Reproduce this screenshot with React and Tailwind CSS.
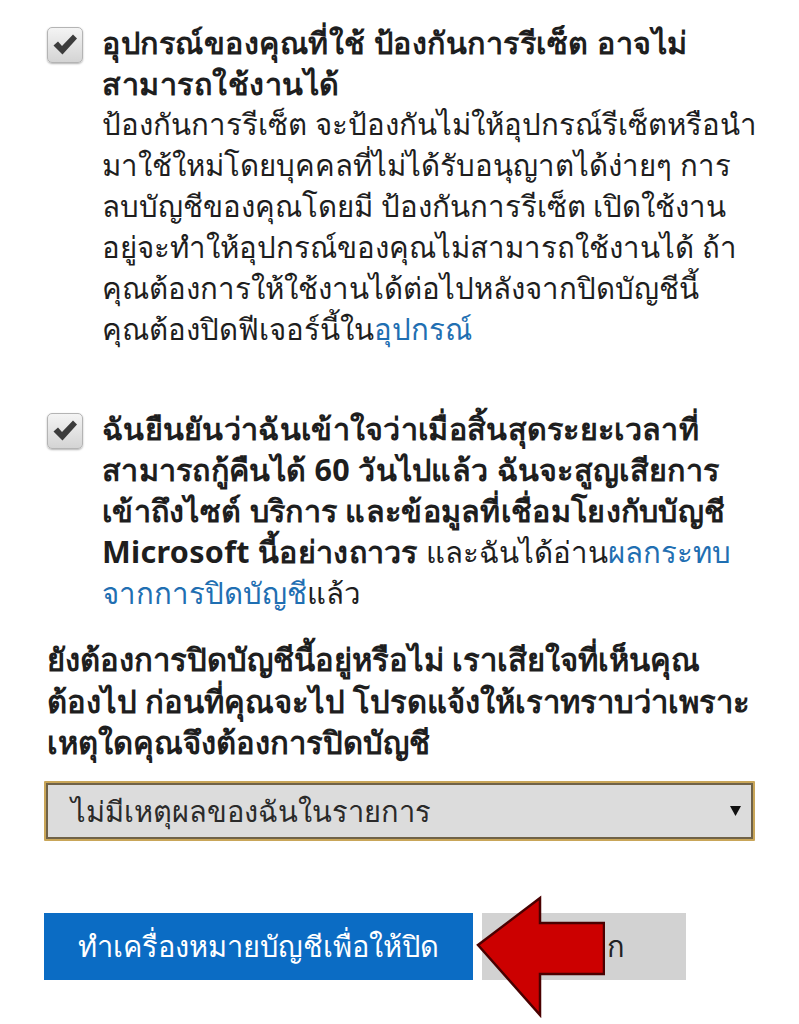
import React from "react";

function CheckBox() {
  return (
    <div className="mt-[5px] flex h-[36px] w-[36px] shrink-0 items-center justify-center rounded-[5px] border border-[#b4b4b4] bg-gradient-to-b from-[#f4f4f4] to-[#d4d4d4] shadow-[0_1px_2px_rgba(0,0,0,0.3)]">
      <svg width="26" height="24" viewBox="0 0 26 24">
        <path d="M1.5 12.5 L6 8.5 L10 13 L21 1.5 L25 5.5 L10.5 21.5 Z" fill="#3c3c3c" />
      </svg>
    </div>
  );
}

export default function App() {
  const font = { fontFamily: '"Noto Sans", "Liberation Sans", sans-serif' };
  return (
    <div className="h-[1024px] w-[799px] overflow-hidden bg-white text-[#1e1e1e]" style={font}>
      <div className="pl-[47px] pt-[22px]">
        <div className="flex gap-[19px]">
          <CheckBox />
          <div className="whitespace-nowrap text-[29.4px] leading-[41px]">
            <div className="text-[30.5px] font-bold tracking-[0.5px]">
              อุปกรณ์ของคุณที่ใช้ ป้องกันการรีเซ็ต อาจไม่
              <br />
              สามารถใช้งานได้
            </div>
            <div>
              ป้องกันการรีเซ็ต จะป้องกันไม่ให้อุปกรณ์รีเซ็ตหรือนำ
              <br />
              มาใช้ใหม่โดยบุคคลที่ไม่ได้รับอนุญาตได้ง่ายๆ การ
              <br />
              ลบบัญชีของคุณโดยมี ป้องกันการรีเซ็ต เปิดใช้งาน
              <br />
              อยู่จะทำให้อุปกรณ์ของคุณไม่สามารถใช้งานได้ ถ้า
              <br />
              คุณต้องการให้ใช้งานได้ต่อไปหลังจากปิดบัญชีนี้
              <br />
              คุณต้องปิดฟีเจอร์นี้ใน<span className="text-[#1f6fb2]">อุปกรณ์</span>
            </div>
          </div>
        </div>

        <div className="mt-[58px] flex gap-[19px]">
          <CheckBox />
          <div className="whitespace-nowrap text-[29.4px] leading-[41px]">
            <div className="text-[30.5px] font-bold tracking-[0.3px]">
              ฉันยืนยันว่าฉันเข้าใจว่าเมื่อสิ้นสุดระยะเวลาที่
              <br />
              สามารถกู้คืนได้ 60 วันไปแล้ว ฉันจะสูญเสียการ
              <br />
              เข้าถึงไซต์ บริการ และข้อมูลที่เชื่อมโยงกับบัญชี
              <br />
              Microsoft นี้อย่างถาวร{" "}
              <span className="text-[29.4px] font-normal tracking-normal">และฉันได้อ่าน</span>
              <span className="text-[29.4px] font-normal tracking-normal text-[#1f6fb2]">ผลกระทบ</span>
            </div>
            <div>
              <span className="text-[#1f6fb2]">จากการปิดบัญชี</span>แล้ว
            </div>
          </div>
        </div>

        <div className="mt-[25px] whitespace-nowrap text-[31px] font-bold leading-[41.5px]">
          ยังต้องการปิดบัญชีนี้อยู่หรือไม่ เราเสียใจที่เห็นคุณ
          <br />
          ต้องไป ก่อนที่คุณจะไป โปรดแจ้งให้เราทราบว่าเพราะ
          <br />
          เหตุใดคุณจึงต้องการปิดบัญชี
        </div>

        <div className="-ml-[3px] mt-[17px] h-[60px] w-[711px] rounded-[1px] bg-[#c9a659] p-[2px]">
          <div className="flex h-full w-full items-center justify-between border-[2px] border-[#6f6248] bg-[#dcdcdc] pl-[23px] pr-[10px]">
            <span className="text-[29px] text-[#2a2a2a]">ไม่มีเหตุผลของฉันในรายการ</span>
            <svg width="11" height="10" viewBox="0 0 11 10">
              <path d="M0 0 L11 0 L5.5 10 Z" fill="#111" />
            </svg>
          </div>
        </div>

        <div className="relative -ml-[3px] mt-[72px] flex gap-[9px]">
          <div className="flex h-[67px] w-[429px] items-center justify-center bg-[#0b6cc4] text-[29px] text-white">
            ทำเครื่องหมายบัญชีเพื่อให้ปิด
          </div>
          <div className="flex h-[67px] w-[204px] items-center justify-center bg-[#d2d2d2] text-[29px] text-[#222]">
            ยกเลิก
          </div>
          <svg className="absolute left-[431px] top-[-18px]" width="130" height="124" viewBox="0 0 130 124">
            <path d="M3 50 L65 3 L65 28 L129 28 L129 79 L65 79 L65 120 Z" fill="#cc0000" stroke="#4a0000" strokeWidth="2.5" strokeLinejoin="miter" />
          </svg>
        </div>
      </div>
    </div>
  );
}
